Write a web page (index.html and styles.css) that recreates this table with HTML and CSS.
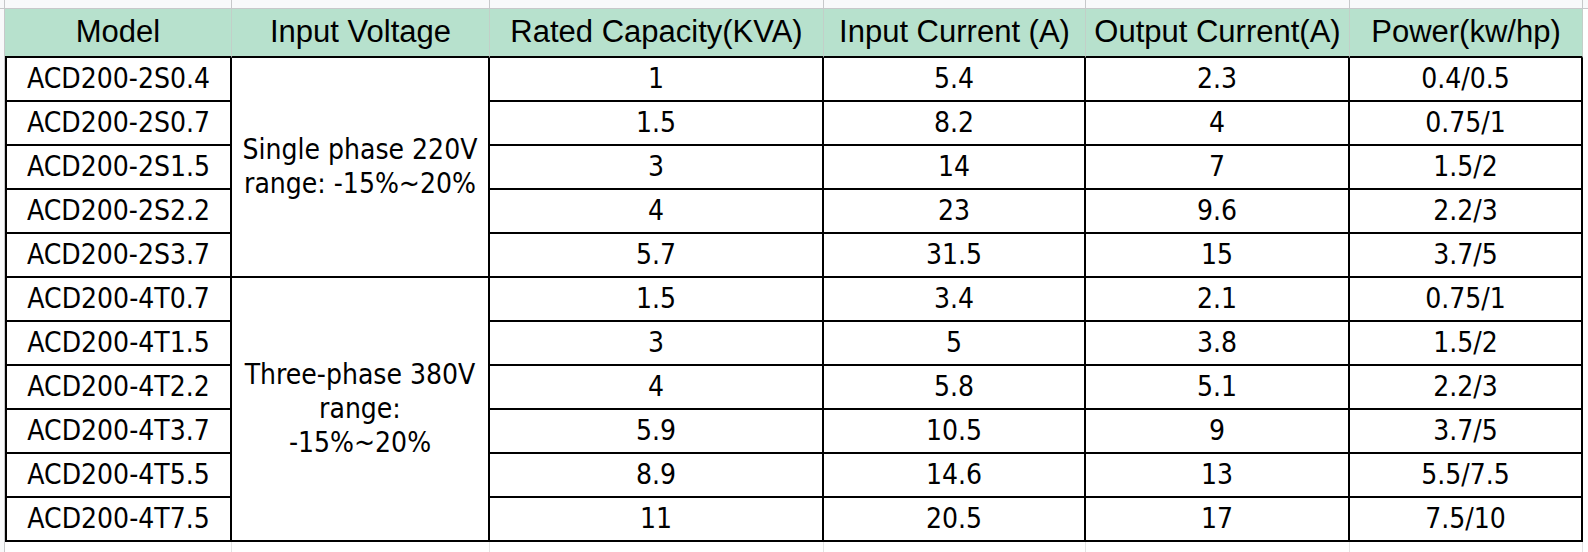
FILE: index.html
```html
<!DOCTYPE html>
<html>
<head>
<meta charset="utf-8">
<link rel="stylesheet" href="styles.css">
</head>
<body>
<div class="sheet">
  <div class="strip"></div><div class="strip"></div><div class="strip"></div><div class="strip"></div><div class="strip"></div><div class="strip"></div><div class="strip"></div><div class="strip last"></div>
  <div class="gutter"></div>
  <div class="filler"></div>

  <div class="hd">Model</div>
  <div class="hd">Input Voltage</div>
  <div class="hd">Rated Capacity(KVA)</div>
  <div class="hd">Input Current (A)</div>
  <div class="hd">Output Current(A)</div>
  <div class="hd">Power(kw/hp)</div>

  <div class="td c1">ACD200-2S0.4</div>
  <div class="td merged span5">Single phase 220V<br>range: -15%~20%</div>
  <div class="td">1</div><div class="td">5.4</div><div class="td">2.3</div><div class="td">0.4/0.5</div>

  <div class="td c1">ACD200-2S0.7</div>
  <div class="td">1.5</div><div class="td">8.2</div><div class="td">4</div><div class="td">0.75/1</div>

  <div class="td c1">ACD200-2S1.5</div>
  <div class="td">3</div><div class="td">14</div><div class="td">7</div><div class="td">1.5/2</div>

  <div class="td c1">ACD200-2S2.2</div>
  <div class="td">4</div><div class="td">23</div><div class="td">9.6</div><div class="td">2.2/3</div>

  <div class="td c1">ACD200-2S3.7</div>
  <div class="td">5.7</div><div class="td">31.5</div><div class="td">15</div><div class="td">3.7/5</div>

  <div class="td c1">ACD200-4T0.7</div>
  <div class="td merged span6">Three-phase 380V<br>range:<br>-15%~20%</div>
  <div class="td">1.5</div><div class="td">3.4</div><div class="td">2.1</div><div class="td">0.75/1</div>

  <div class="td c1">ACD200-4T1.5</div>
  <div class="td">3</div><div class="td">5</div><div class="td">3.8</div><div class="td">1.5/2</div>

  <div class="td c1">ACD200-4T2.2</div>
  <div class="td">4</div><div class="td">5.8</div><div class="td">5.1</div><div class="td">2.2/3</div>

  <div class="td c1">ACD200-4T3.7</div>
  <div class="td">5.9</div><div class="td">10.5</div><div class="td">9</div><div class="td">3.7/5</div>

  <div class="td c1">ACD200-4T5.5</div>
  <div class="td">8.9</div><div class="td">14.6</div><div class="td">13</div><div class="td">5.5/7.5</div>

  <div class="td c1">ACD200-4T7.5</div>
  <div class="td">11</div><div class="td">20.5</div><div class="td">17</div><div class="td">7.5/10</div>

  <div class="bt"></div><div class="bt"></div><div class="bt"></div><div class="bt"></div><div class="bt"></div><div class="bt"></div>
</div>
</body>
</html>
```

FILE: styles.css
```css
html, body {
  margin: 0;
  padding: 0;
  background: #ffffff;
}

.sheet {
  display: grid;
  grid-template-columns: 5px 227px 258px 334px 262px 264px 233px 1fr;
  grid-template-rows: 9px 49px repeat(11, 44px) 1fr;
  height: 552px;
  width: 1588px;
  overflow: hidden;
  color: #000000;
}

.sheet > div {
  box-sizing: border-box;
}

.strip {
  background: #f8f9fa;
  border-bottom: 1px solid #c7c8ca;
  border-right: 1px solid #c7c8ca;
}

.strip.last {
  border-right: none;
}

.gutter {
  grid-column: 1;
  grid-row: 2 / -1;
  background: #f8f9fa;
  border-right: 1px solid #c7c8ca;
}

.filler {
  grid-column: 8;
  grid-row: 2 / -1;
  background: #ffffff;
}

.hd {
  background: #b7e1cd;
  border-right: 1px solid #c2cfc8;
  border-bottom: 2px solid #000000;
  display: flex;
  align-items: center;
  justify-content: center;
  font-family: "Liberation Sans", Arial, sans-serif;
  font-size: 31px;
  white-space: nowrap;
  padding-bottom: 1px;
}

.td {
  border-right: 2px solid #000000;
  border-bottom: 2px solid #000000;
  display: flex;
  align-items: center;
  justify-content: center;
  text-align: center;
  font-family: "DejaVu Sans Condensed", "DejaVu Sans", sans-serif;
  font-stretch: condensed;
  font-size: 28px;
  line-height: 34px;
  white-space: nowrap;
}

.td.c1 {
  border-left: 2px solid #000000;
}

.td.span5 {
  grid-row: span 5;
}

.td.span6 {
  grid-row: span 6;
}

.bt {
  border-right: 1px solid #e3e3e3;
}
```
